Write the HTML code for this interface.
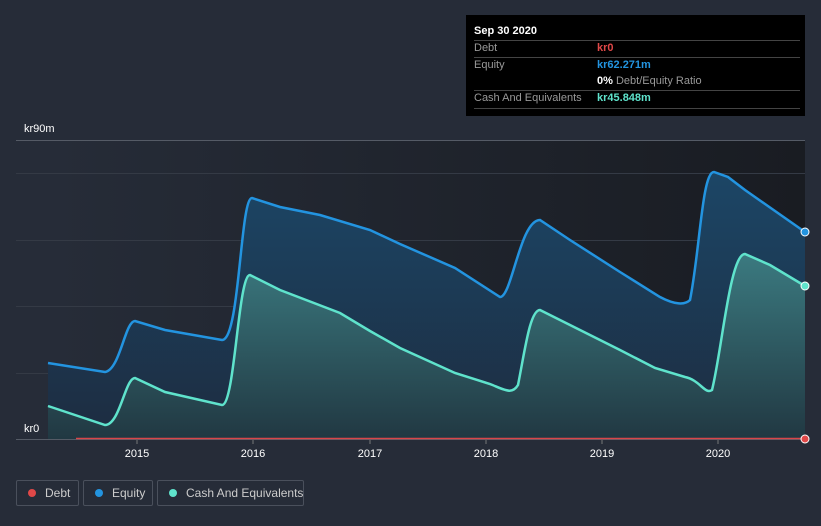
<!DOCTYPE html>
<html><head><style>
html,body{margin:0;width:821px;height:526px;overflow:hidden}
body{background:#262c38;font-family:"Liberation Sans",sans-serif;position:relative}
.tip{position:absolute;left:466px;top:15px;width:339px;height:101px;background:#000;color:#fff;font-size:11px}
.row{position:absolute;left:8px;right:5px;border-top:1px solid #444}
.lbl{position:absolute;left:8px;color:#999}
.val{position:absolute;left:131px;font-weight:bold}
.leg{position:absolute;top:480px;height:26px;border:1px solid #4a505c;border-radius:2px;color:#ccc;font-size:12px;line-height:24px;box-sizing:border-box;white-space:nowrap;overflow:hidden}
.leg i{display:inline-block;width:8px;height:8px;border-radius:50%;margin:0 9px 0 11px}
</style></head><body>
<svg width="821" height="526" style="position:absolute;left:0;top:0">
<defs>
<linearGradient id="bg" x1="0" x2="1" y1="0" y2="0"><stop offset="0" stop-color="#262c38"/><stop offset="1" stop-color="#191c22"/></linearGradient>
<linearGradient id="eq" x1="0" y1="0" x2="0" y2="1"><stop offset="0" stop-color="#1c4666"/><stop offset="1" stop-color="#1d2c40"/></linearGradient>
<linearGradient id="ca" x1="0" y1="0" x2="0" y2="1"><stop offset="0" stop-color="#3b7a80"/><stop offset="1" stop-color="#213842"/></linearGradient>
</defs>
<rect x="48" y="140" width="757" height="299" fill="url(#bg)"/>
<g stroke="#343a45" stroke-width="1"><line x1="16" x2="805" y1="173.5" y2="173.5"/><line x1="16" x2="805" y1="240.5" y2="240.5"/><line x1="16" x2="805" y1="306.5" y2="306.5"/><line x1="16" x2="805" y1="373.5" y2="373.5"/></g>
<line x1="16" x2="805" y1="140.5" y2="140.5" stroke="#555b66"/>
<line x1="16" x2="805" y1="439.5" y2="439.5" stroke="#555b66"/>
<path d="M48,363 L105,372 C120,370 125,321 135,321 L165,330 L222,340 C240,340 240,198 252,198 L280,207 L320,215 L370,230 L400,244 L455,268 L500,297 C512,297 520,220 540,220 L570,240 L620,272 L660,297 C675,305 685,305 690,300 C700,250 702,172 714,172 L728,177 L745,190 L805,232 L805,439 L48,439Z" fill="url(#eq)"/>
<path d="M48,406 L105,425 C120,425 125,378 135,378 L165,392 L222,405 C235,405 238,275 250,275 L280,290 L340,313 L370,331 L400,348 L455,373 L490,384 C505,390 512,395 518,385 C525,350 530,310 540,310 L570,325 L620,350 L655,368 L685,377 C700,380 705,395 712,390 C722,350 730,254 745,254 L770,265 L805,286 L805,439 L48,439Z" fill="url(#ca)"/>
<path d="M48,363 L105,372 C120,370 125,321 135,321 L165,330 L222,340 C240,340 240,198 252,198 L280,207 L320,215 L370,230 L400,244 L455,268 L500,297 C512,297 520,220 540,220 L570,240 L620,272 L660,297 C675,305 685,305 690,300 C700,250 702,172 714,172 L728,177 L745,190 L805,232" fill="none" stroke="#2394e0" stroke-width="2.5"/>
<path d="M48,406 L105,425 C120,425 125,378 135,378 L165,392 L222,405 C235,405 238,275 250,275 L280,290 L340,313 L370,331 L400,348 L455,373 L490,384 C505,390 512,395 518,385 C525,350 530,310 540,310 L570,325 L620,350 L655,368 L685,377 C700,380 705,395 712,390 C722,350 730,254 745,254 L770,265 L805,286" fill="none" stroke="#5fe3cc" stroke-width="2.5"/>
<line x1="76" x2="805" y1="438.5" y2="438.5" stroke="#d9464a" stroke-width="1.5"/>
<circle cx="805" cy="232" r="4" fill="#2394e0" stroke="#fff" stroke-width="1"/>
<circle cx="805" cy="286" r="4" fill="#5fe3cc" stroke="#fff" stroke-width="1"/>
<circle cx="805" cy="439" r="4" fill="#e04848" stroke="#fff" stroke-width="1"/>
<g stroke="#777"><line x1="137" x2="137" y1="440" y2="444"/><line x1="253" x2="253" y1="440" y2="444"/><line x1="370" x2="370" y1="440" y2="444"/><line x1="486" x2="486" y1="440" y2="444"/><line x1="602" x2="602" y1="440" y2="444"/><line x1="718" x2="718" y1="440" y2="444"/></g>
<g fill="#fff" font-size="11" text-anchor="middle"><text x="137" y="457">2015</text><text x="253" y="457">2016</text><text x="370" y="457">2017</text><text x="486" y="457">2018</text><text x="602" y="457">2019</text><text x="718" y="457">2020</text></g>
<text x="24" y="132" fill="#fff" font-size="11">kr90m</text>
<text x="24" y="432" fill="#fff" font-size="11">kr0</text>
</svg>
<div class="tip">
<div style="position:absolute;left:8px;top:10px;font-weight:bold">Sep 30 2020</div>
<div class="row" style="top:25px"></div>
<div class="lbl" style="top:27px">Debt</div><div class="val" style="top:27px;color:#e04848">kr0</div>
<div class="row" style="top:42px"></div>
<div class="lbl" style="top:44px">Equity</div><div class="val" style="top:44px;color:#2394e0">kr62.271m</div>
<div style="position:absolute;left:131px;top:60px;color:#999"><b style="color:#fff">0%</b> Debt/Equity Ratio</div>
<div class="row" style="top:75px"></div>
<div class="lbl" style="top:77px">Cash And Equivalents</div><div class="val" style="top:77px;color:#5fe3cc">kr45.848m</div>
<div class="row" style="top:93px"></div>
</div>
<div class="leg" style="left:16px;width:63px"><i style="background:#e04848"></i>Debt</div>
<div class="leg" style="left:83px;width:70px"><i style="background:#2394e0"></i>Equity</div>
<div class="leg" style="left:157px;width:147px"><i style="background:#5fe3cc"></i>Cash And Equivalents</div>
</body></html>
